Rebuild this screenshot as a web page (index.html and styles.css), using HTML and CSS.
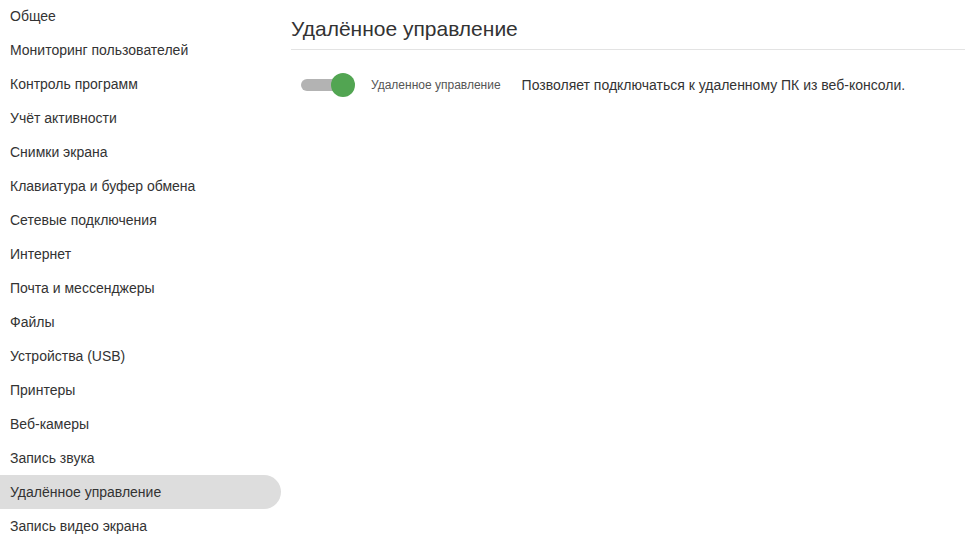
FILE: index.html
```html
<!DOCTYPE html>
<html lang="ru">

<head>
    <meta charset="UTF-8">
    <meta name="viewport" content="width=device-width, initial-scale=1.0">
    <title>Настройки</title>

    <link rel="stylesheet" href="styles.css">
</head>

<body>
    <nav class="sidebar">
        <a class="nav-item">Общее</a>
        <a class="nav-item">Мониторинг пользователей</a>
        <a class="nav-item">Контроль программ</a>
        <a class="nav-item">Учёт активности</a>
        <a class="nav-item">Снимки экрана</a>
        <a class="nav-item">Клавиатура и буфер обмена</a>
        <a class="nav-item">Сетевые подключения</a>
        <a class="nav-item">Интернет</a>
        <a class="nav-item">Почта и мессенджеры</a>
        <a class="nav-item">Файлы</a>
        <a class="nav-item">Устройства (USB)</a>
        <a class="nav-item">Принтеры</a>
        <a class="nav-item">Веб-камеры</a>
        <a class="nav-item">Запись звука</a>
        <a class="nav-item active">Удалённое управление</a>
        <a class="nav-item">Запись видео экрана</a>
    </nav>

    <main class="content">
        <h1 class="page-title">Удалённое управление</h1>

        <div class="setting-row">
            <label class="switch">
                <span class="switch-track"></span>
                <span class="switch-knob"></span>
            </label>
            <span class="setting-label">Удаленное управление</span>
            <span class="setting-desc">Позволяет подключаться к удаленному ПК из веб-консоли.</span>
        </div>
    </main>
</body>

</html>
```

FILE: styles.css
```css
body {
    font-family: 'Liberation Sans', Arial, sans-serif;
    background-color: #fff;
    color: #333;
    margin: 0;
    display: flex;
    gap: 10px;
}

.sidebar {
    width: 281px;
    flex-shrink: 0;
    display: flex;
    flex-direction: column;
    margin-top: -1px;
}

.nav-item {
    display: block;
    height: 34px;
    line-height: 34px;
    padding-left: 10px;
    font-size: 14px;
    color: #333;
    cursor: pointer;
}

.nav-item.active {
    background-color: #ddd;
    border-radius: 0 17px 17px 0;
}

.content {
    flex: 1;
}

.page-title {
    margin: 17px 0 0;
    padding-bottom: 8px;
    font-size: 21px;
    line-height: 24px;
    font-weight: normal;
    color: #333;
    border-bottom: 1px solid #e3e3e3;
}

.setting-row {
    display: flex;
    align-items: center;
    margin-top: 23px;
    padding-left: 10px;
    height: 24px;
}

.switch {
    position: relative;
    width: 54px;
    height: 24px;
    margin-right: 16px;
}

.switch-track {
    position: absolute;
    left: 0;
    top: 6px;
    width: 48px;
    height: 12px;
    border-radius: 6px;
    background-color: #b3b3b3;
}

.switch-knob {
    position: absolute;
    left: 30px;
    top: 0;
    width: 24px;
    height: 24px;
    border-radius: 50%;
    background-color: #52a552;
}

.setting-label {
    font-size: 12px;
    color: #555;
    margin-right: 21px;
}

.setting-desc {
    font-size: 14px;
    color: #333;
}
```
